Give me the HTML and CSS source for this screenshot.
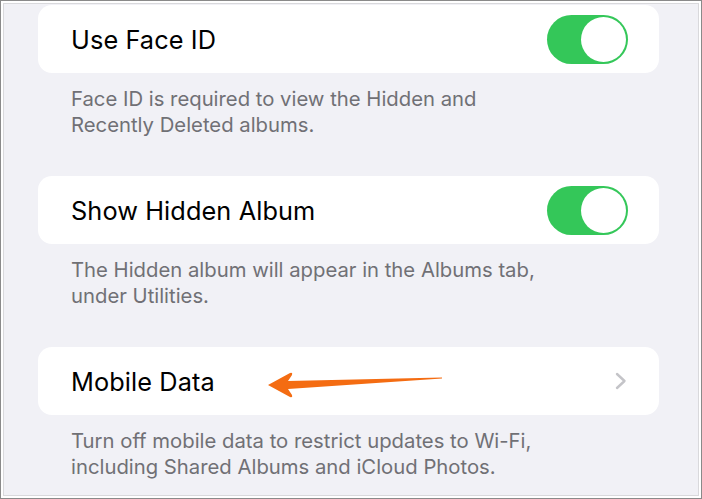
FILE: index.html
```html
<!DOCTYPE html>
<html>
<head>
<meta charset="utf-8">
<link rel="stylesheet" href="styles.css">
</head>
<body>
<div class="frame">
  <div class="inner">
    <section class="group">
      <div class="card">
        <span class="label">Use Face ID</span>
        <span class="toggle"><span class="knob"></span></span>
      </div>
      <p class="foot">Face ID is required to view the Hidden and<br>Recently Deleted albums.</p>
    </section>
    <section class="group">
      <div class="card">
        <span class="label">Show Hidden Album</span>
        <span class="toggle"><span class="knob"></span></span>
      </div>
      <p class="foot">The Hidden album will appear in the Albums tab,<br>under Utilities.</p>
    </section>
    <section class="group">
      <div class="card">
        <span class="label">Mobile Data</span>
        <svg class="arrow" width="180" height="30" viewBox="0 0 180 30">
          <path d="M2 16 L24 4 Q27 3 26 6 L22 12 L176 8.5 L176 9.5 L22 20 L26 26 Q27 29 24 28 Z" fill="#f46c12"/>
        </svg>
        <svg class="chev" width="12" height="18" viewBox="0 0 12 18">
          <path d="M2 2 L9.5 9 L2 16" fill="none" stroke="#c4c4c8" stroke-width="2.4" stroke-linecap="round" stroke-linejoin="round"/>
        </svg>
      </div>
      <p class="foot">Turn off mobile data to restrict updates to Wi-Fi,<br>including Shared Albums and iCloud Photos.</p>
    </section>
  </div>
</div>
</body>
</html>
```
FILE: styles.css
```css
html, body {
  margin: 0;
  padding: 0;
}
body {
  width: 702px;
  height: 499px;
  font-family: Inter, "Noto Sans", sans-serif;
  overflow: hidden;
}
.frame {
  box-sizing: border-box;
  width: 702px;
  height: 499px;
  border: 1px solid #8a8a8a;
  background: #ffffff;
  padding: 2px;
}
.inner {
  box-sizing: border-box;
  height: 100%;
  border: 1px solid #d9d9dc;
  background: #f1f1f6;
  padding: 1px 39px 0 34px;
}
.group {
  margin-bottom: 38px;
}
.card {
  height: 68px;
  background: #ffffff;
  border-radius: 14px;
  display: flex;
  align-items: center;
  padding: 0 30px 0 33px;
  position: relative;
}
.label {
  font-size: 25.3px;
  color: #000;
  letter-spacing: 0.1px;
  flex: 1;
}
.toggle {
  width: 81px;
  height: 49px;
  border-radius: 25px;
  background: #34c759;
  position: relative;
  margin-right: 1px;
}
.knob {
  position: absolute;
  right: 2px;
  top: 2px;
  width: 45px;
  height: 45px;
  border-radius: 50%;
  background: #fff;
}
.arrow {
  position: absolute;
  left: 228px;
  top: 22px;
}
.chev {
  margin-right: 2px;
}
.foot {
  margin: 13px 0 0 0;
  padding-left: 33px;
  font-size: 20.3px;
  line-height: 26px;
  color: #707075;
}
```
